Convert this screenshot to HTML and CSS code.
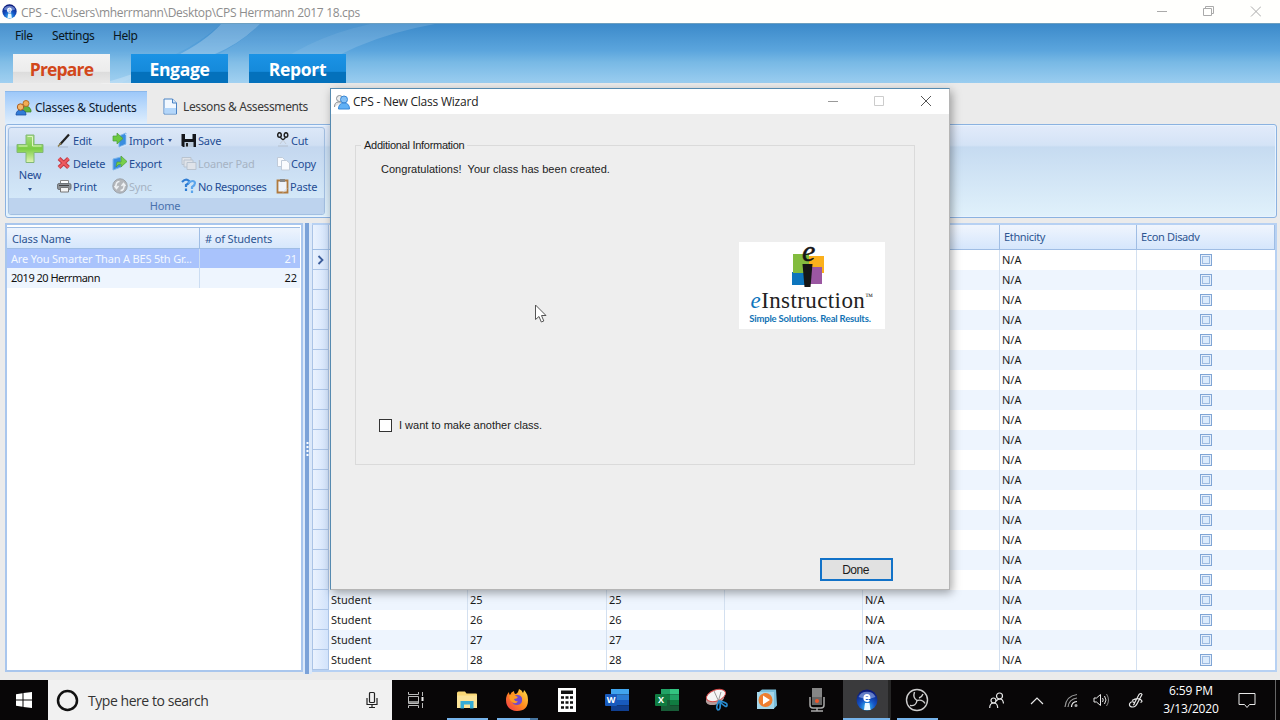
FILE: index.html
```html
<!DOCTYPE html>
<html lang="en">

<head>
    <meta charset="UTF-8">
    <title>CPS</title>
    <link rel="stylesheet" href="styles.css">
</head>

<body>
    <svg class="defs" width="0" height="0">
        <defs>
            <radialGradient id="orb" cx="50%" cy="85%" r="80%">
                <stop offset="0" stop-color="#39c4f5" />
                <stop offset=".45" stop-color="#1557c8" />
                <stop offset="1" stop-color="#0a1878" />
            </radialGradient>
            <linearGradient id="plus" x1="0" y1="0" x2="0" y2="1">
                <stop offset="0" stop-color="#a5dd80" />
                <stop offset=".5" stop-color="#7ccd45" />
                <stop offset="1" stop-color="#e0f5b4" />
            </linearGradient>
            <linearGradient id="fire" x1="1" y1="0" x2="0" y2="1">
                <stop offset="0" stop-color="#ffe14a" />
                <stop offset=".5" stop-color="#ff8a1e" />
                <stop offset="1" stop-color="#f0304f" />
            </linearGradient>
            <symbol id="cps" viewBox="0 0 22 22">
                <circle cx="11" cy="11" r="10.5" fill="url(#orb)" />
                <path d="M2.500 8a9 8 0 0 1 17 0q-8 3-17 0z" fill="#a9bdf0" opacity=".55" />
                <path d="M8.500 9h5c0-4-5-4-5.200 0 0 3.500 3.500 3.500 5 2" fill="none" stroke="#fff" stroke-width="1.800" />
                <path d="M9 14h4.500l1 7h-6.500z" fill="#eaf8ff" />
            </symbol>
        </defs>
    </svg>

    <header class="titlebar">
        <svg class="app-icon" width="15" height="15"><use href="#cps" /></svg>
        <span class="title">CPS - C:\Users\mherrmann\Desktop\CPS Herrmann 2017 18.cps</span>
        <svg class="win-buttons" width="110" height="22" fill="none" stroke="#aaa">
            <path d="M6 10.500h10" />
            <path d="M52.500 7.500h8v7h-8zM54.500 7v-1.500h8v7h-2M100 5.500l10 10M110 5.500l-10 10" />
        </svg>
    </header>

    <div class="banner">
        <svg class="rays" width="500" height="60">
            <path d="M0 0h221q-20 18-45 30L120 60H0z" fill="#fff" opacity=".07" />
            <path d="M221 0h39q-20 20-45 30L150 60H100q90-25 121-60z" fill="#fff" opacity=".24" />
            <path d="M260 0h110q-70 15-120 60h-100q80-28 110-60z" fill="#fff" opacity=".08" />
            <path d="M370 0h65q-85 15-140 60h-45Q300 15 370 0z" fill="#fff" opacity=".14" />
        </svg>
        <nav class="menu">
            <span class="m-file">File</span><span class="m-settings">Settings</span><span class="m-help">Help</span>
        </nav>
        <nav class="modes">
            <div class="mode active"><span>Prepare</span></div>
            <div class="mode"><span>Engage</span></div>
            <div class="mode"><span>Report</span></div>
        </nav>
    </div>

    <main class="workspace">
        <div class="subtabs">
            <div class="subtab active">
                <svg width="17" height="17">
                    <path d="M6.500 12q0-5 4-5t5.500 4v2h-9z" fill="#62b33f" stroke="#3c8129" stroke-width=".7" />
                    <circle cx="11" cy="4.500" r="3" fill="#f2ad53" stroke="#b06f24" />
                    <path d="M1 16q0-5 5-5t5 5z" fill="#2f7bd7" stroke="#1a4fa3" stroke-width=".8" />
                    <circle cx="5.500" cy="8" r="3.200" fill="#f4b76a" stroke="#a95f26" />
                </svg>
                <span>Classes &amp; Students</span>
            </div>
            <div class="subtab lessons">
                <svg width="15" height="17">
                    <path d="M1 1h8.500l4 4v11H1z" fill="#f2f8ff" stroke="#4b83c4" />
                    <path d="M1.500 10h11.500v5.500h-11.500z" fill="#b3d6fa" />
                    <path d="M9.500 1v4h4" fill="#d2e6fb" stroke="#4b83c4" />
                </svg>
                <span>Lessons &amp; Assessments</span>
            </div>
        </div>

        <div class="ribbon">
            <div class="group">
                <div class="tools">
                    <div class="new-btn">
                        <svg width="28" height="30">
                            <path d="M10 1h8v9.500h9v8h-9v10h-8v-10H1v-8h9z" fill="url(#plus)" stroke="#82b878" />
                            <path d="M11.500 2.500h5v9.500h9M2.500 12h9" stroke="#dff5c2" fill="none" />
                        </svg>
                        <span>New</span>
                        <i class="caret"></i>
                    </div>
                    <div class="col c1">
                        <div class="tool">
                            <svg width="14" height="15"><path d="M1 14h10" stroke="#a9b9cf" /><path d="M3 11.500L12 1.500" stroke="#222" stroke-width="2.200" /><path d="M1 13.500l3-3.500" stroke="#8a7a48" stroke-width="1.300" /></svg>
                            <span>Edit</span>
                        </div>
                        <div class="tool">
                            <svg width="14" height="14"><path d="M2 2.500l9.500 9M11.500 2.500l-9.500 9" stroke="#c13a45" stroke-width="4" /><path d="M2 2.500l9.500 9M11.500 2.500l-9.500 9" stroke="#ee5a60" stroke-width="2" /></svg>
                            <span>Delete</span>
                        </div>
                        <div class="tool">
                            <svg width="15" height="14"><path d="M3.500 5V1.500h8V5" fill="#fff" stroke="#888" /><rect x=".5" y="4.500" width="13.500" height="6" rx="1.500" fill="#8d9297" stroke="#707579" /><path d="M3.500 8.500h8v4.500h-8z" fill="#f4f4f4" stroke="#777" /><path d="M2 6.500h10" stroke="#444" /></svg>
                            <span>Print</span>
                        </div>
                    </div>
                    <div class="col c2">
                        <div class="tool">
                            <svg width="16" height="16"><path d="M7 4l7-3v11l-7 3z" fill="#3a8de0" stroke="#7fb5ea" /><path d="M13 2l2 1v10l-7 2.500" stroke="#cfe4fa" fill="none" /><path d="M1 4h4V1l6 5.500-6 5.500V9H1z" fill="#6cc93f" stroke="#4c9c3a" stroke-width=".7" /></svg>
                            <span>Import</span><i class="caret"></i>
                        </div>
                        <div class="tool">
                            <svg width="16" height="16"><path d="M1 4l8-2v10l-8 3z" fill="#3a8de0" stroke="#7fb5ea" /><path d="M5 7h4V1l6 5.500-6 5.500V9q-3 0-5 3z" fill="#79d04a" stroke="#4c9c3a" stroke-width=".7" /></svg>
                            <span>Export</span>
                        </div>
                        <div class="tool off">
                            <svg width="16" height="16"><circle cx="8" cy="8" r="7.200" fill="#b4b7bb" stroke="#9da3aa" /><path d="M7.500 3.500q-4 0-3.500 6M2.500 8L4.500 10.500 6.500 8M8.500 12.500q4 0 3.500-6M9.500 8L11.500 5.500 13.500 8" stroke="#eef1f4" stroke-width="1.500" fill="none" /></svg>
                            <span>Sync</span>
                        </div>
                    </div>
                    <div class="col c3">
                        <div class="tool">
                            <svg width="16" height="15"><path d="M.5 1h14.500v13H2l-1.500-1.500z" fill="#15171c" /><path d="M4 1h7.500v5H4z" fill="#dce9f7" /><path d="M3.500 9h9v5h-9z" fill="#bccbdc" /><path d="M5 10h2v3.500H5z" fill="#222" /></svg>
                            <span>Save</span>
                        </div>
                        <div class="tool off">
                            <svg width="16" height="15" fill="#dfe3e9" stroke="#b9c3cf"><path d="M1 1.500h9v7H1z" /><path d="M3 4h9v7H3z" /><path d="M6 6.500h9v7H6z" /></svg>
                            <span>Loaner Pad</span>
                        </div>
                        <div class="tool noresp">
                            <svg width="16" height="16" fill="none" stroke="#2e7cd3" stroke-width="2.200"><path d="M1 4q4-4 7-1 1 2-3 4v2M5 10.500v2.500" /><path d="M7 5q6-4 7 0 0 2-3 4v2M11 12.500v2.500" stroke="#5ba5ec" /></svg>
                            <span>No Responses</span>
                        </div>
                    </div>
                    <div class="col c4">
                        <div class="tool">
                            <svg width="15" height="16"><path d="M2 14h10" stroke="#b5c0ce" /><ellipse cx="3.500" cy="3" rx="1.800" ry="2.300" fill="none" stroke="#222" stroke-width="1.500" /><ellipse cx="10" cy="3" rx="1.800" ry="2.300" fill="none" stroke="#222" stroke-width="1.500" /><path d="M4 5l3 3 3-3" stroke="#222" fill="none" stroke-width="1.300" /><path d="M7 8l3 4M7 8l-3 4" stroke="#c5ccd6" /></svg>
                            <span>Cut</span>
                        </div>
                        <div class="tool">
                            <svg width="15" height="15" fill="#f9fbfe" stroke="#c0cbd9"><path d="M1.500 1.500h5l2 2v7h-7z" /><path d="M5.500 4.500h5l3 2.500v7h-8z" /></svg>
                            <span>Copy</span>
                        </div>
                        <div class="tool">
                            <svg width="14" height="16"><path d="M1.500 2.500h10v12h-10z" fill="#eef3fa" stroke="#b07a3e" stroke-width="1.800" /><path d="M4 1h5v3H4z" fill="#888" /><path d="M7 14.500l4-4" stroke="#ccd5e0" /></svg>
                            <span>Paste</span>
                        </div>
                    </div>
                </div>
                <div class="group-label">Home</div>
            </div>
        </div>

        <div class="panels">
            <section class="class-list">
                <div class="class-row head"><span>Class Name</span><span>#&nbsp;of Students</span></div>
                <div class="class-row selected"><span>Are You Smarter Than A BES 5th Gr...</span><span>21</span></div>
                <div class="class-row second"><span>2019 20 Herrmann</span><span>22</span></div>
            </section>
            <div class="splitter"><svg width="5" height="16"><path d="M2.500 1v14" stroke="#fff" stroke-width="2" stroke-dasharray="2 2" /></svg></div>
            <section class="grid" id="grid">
                <div class="grid-row head">
                    <b></b><span></span><span></span><span></span><span></span><span></span><span>Ethnicity</span><span>Econ Disadv</span>
                </div>
            </section>
        </div>
    </main>

    <div class="dialog">
        <div class="dialog-title">
            <svg width="16" height="16">
                <circle cx="5.500" cy="4.500" r="3" fill="#eee" stroke="#8b8f94" />
                <path d="M.5 13q0-5 4-5h4" fill="#e5e5e5" stroke="#8b8f94" />
                <circle cx="10" cy="5.500" r="3.500" fill="#84c0f5" stroke="#3787d6" />
                <path d="M4.500 15q0-6 5.500-6t5.500 6z" fill="#5fb0f5" stroke="#3787d6" />
            </svg>
            <span>CPS - New Class Wizard</span>
            <svg class="dialog-buttons" width="104" height="20" fill="none">
                <path d="M1 9.500h10" stroke="#999" />
                <path d="M47.500 4.500h9v9h-9z" stroke="#ccc" />
                <path d="M94 4l10 10M104 4l-10 10" stroke="#555" />
            </svg>
        </div>
        <fieldset class="info">
            <legend>Additional Information</legend>
            <p class="congrats">Congratulations!&nbsp; Your class has been created.</p>
            <div class="logo">
                <svg width="40" height="48">
                    <path d="M3 30h13v13H3z" fill="#0d75bd" />
                    <path d="M4 12h16v19H4z" fill="#83bc3e" />
                    <path d="M20 14h15v17H20z" fill="#fbb01c" />
                    <path d="M20 25h13v17H20z" fill="#9b57a2" />
                    <path d="M13.500 22h10l-2 23h-6z" fill="#161616" />
                    <text x="13" y="19" class="logo-e">e</text>
                </svg>
                <div class="brand"><i>e</i><span>Instruction</span><sup>™</sup></div>
                <div class="slogan">Simple Solutions. Real Results.</div>
            </div>
            <label class="another"><i class="box"></i><span>I want to make another class.</span></label>
        </fieldset>
        <button class="done">Done</button>
    </div>

    <svg class="cursor" width="14" height="20"><path d="M1.500 1v14.500l3.500-3 2.300 5.500 2.500-1-2.300-5.500h4.500z" fill="#fff" stroke="#555" /></svg>

    <footer class="taskbar">
        <div class="start"><svg width="16" height="16" fill="#fff"><path d="M0 2.200L6.500 1.300v6.200H0zM7.500 1.100L16 0v7.500H7.500zM0 8.500h6.500v6.200L0 13.800zM7.500 8.500H16V16l-8.500-1.100z" /></svg></div>
        <div class="search">
            <svg width="23" height="23"><circle cx="11.500" cy="11.500" r="9.500" fill="none" stroke="#111" stroke-width="2.500" /></svg>
            <span>Type here to search</span>
            <svg width="12" height="18" fill="none" stroke="#222" stroke-width="1.200"><rect x="3.500" y="1.500" width="5" height="10" rx="1" /><path d="M1 7v6.500h10V7M6 13.500v3M3 16.500h6" /></svg>
        </div>
        <div class="apps">
            <div class="app"><svg width="18" height="18" fill="none" stroke="#bbb"><path d="M1.500 1v2.500h10V1M1.500 17v-2.500h10V17M1.500 5.500h10v7h-10zM15.500 1v4M15.500 12v5" /><path d="M2 10h9v2H2z" fill="#888" stroke="none" /><path d="M15.500 6v4" stroke="#eee" stroke-width="2" /></svg></div>
            <div class="app open"><svg width="22" height="20"><path d="M1 3q0-1.500 1.500-1.500H9l1.500 2H20q1 0 1 1V18H1z" fill="#f9d775" /><path d="M1 5.500h20V18H1z" fill="#fbe398" /><path d="M4.500 18.500V11h13v7.500h-3.500v-4H8v4z" fill="#35acd6" /></svg></div>
            <div class="app open split"><svg width="24" height="24"><path d="M14 1q3 1 4 4 1-2 1-3 4 4 4 10 0 11-11 11Q1 22 1 12q0-5 3-8 0 3 1 3 1-3 4-4 0 2 1 3 3 0 4-5z" fill="url(#fire)" /><path d="M8 8q7-3 9 2 1 7-5 7-5 0-5-5 0-2 1-4z" fill="#7449cb" /><path d="M5 7q4-1 6 1l2 1q-1 2-4 2 1 3 4 2-2 4-6 1-4-3-2-7z" fill="#ff9c21" /></svg></div>
            <div class="app"><svg width="18" height="24"><path d="M0 0h18v24H0z" fill="#fff" /><path d="M3 2.500h12v3.500H3z" fill="#111" /><path d="M3 9.500h12M3 14.500h12M3 19.500h12" stroke="#111" stroke-width="2.500" stroke-dasharray="3 1.500" /></svg></div>
            <div class="app"><svg width="24" height="22"><path d="M6 0h18v5.500H6z" fill="#41a5ee" /><path d="M6 5.500h18V11H6z" fill="#2b7cd3" /><path d="M6 11h18v5.500H6z" fill="#185abd" /><path d="M6 16.500h18V22H6z" fill="#103f91" /><rect y="5" width="12" height="12" rx="1" fill="#185abd" /><text x="6" y="14.300" class="ms">W</text></svg></div>
            <div class="app"><svg width="24" height="22"><path d="M6 0h9v5.500H6z" fill="#21a366" /><path d="M15 0h9v5.500h-9z" fill="#33c481" /><path d="M6 5.500h9V11H6zM15 11h9v5.500h-9z" fill="#107c41" /><path d="M15 5.500h9V11h-9z" fill="#21a366" /><path d="M6 11h9v5.500H6zM6 16.500h18V22H6z" fill="#185c37" /><rect y="5" width="12" height="12" rx="1" fill="#107c41" /><text x="6" y="14.300" class="ms">X</text></svg></div>
            <div class="app"><svg width="24" height="24"><ellipse cx="10" cy="11" rx="9.500" ry="5.500" fill="#b39c9c" transform="rotate(-20 10 11)" /><ellipse cx="11" cy="7.500" rx="10" ry="5.500" fill="#f5f5f5" stroke="#d74949" transform="rotate(-20 11 7.500)" /><path d="M9 3l5 11M16 4l-3 10" stroke="#999" /><path d="M14 13q-4 7-1 9 3 0 2-8 7 7 7 3 1-2-7-4z" fill="none" stroke="#288bd0" stroke-width="1.700" /></svg></div>
            <div class="app"><svg width="22" height="22"><path d="M3 3l3-2.500h14l1 16-3 3z" fill="#79bdda" /><path d="M1 3h17v17H1z" fill="#a4d6ea" /><circle cx="9.500" cy="11" r="7" fill="#ee7e2f" /><path d="M7 6.500l7 4.500-7 4.500z" fill="#fff" /></svg></div>
            <div class="app"><svg width="16" height="24"><path d="M3 0h10v9H3z" fill="#858585" /><path d="M3 9h10v8H3z" fill="#666" /><path d="M1 9v8q0 3 3 3h8q3 0 3-3V9M8 20v3M2 23h12" fill="none" stroke="#aaa" stroke-width="1.500" /><circle cx="8" cy="13" r="2" fill="#f0572a" /></svg></div>
            <div class="app open current"><svg width="22" height="22"><use href="#cps" /></svg></div>
            <div class="app open"><svg width="24" height="24" fill="none" stroke="#ccc" stroke-width="1.400"><circle cx="12" cy="12" r="10.500" /><path d="M9.500 4q-2 6 2.500 8.500 5.500-1.500 8 3M12 12.500q-1 6-7 5M18 6q-1 3-4 4" /></svg></div>
        </div>
        <div class="tray">
            <svg width="15" height="17" fill="none" stroke="#e8e8e8" stroke-width="1.200"><circle cx="10.500" cy="4" r="3" /><circle cx="4.500" cy="8.500" r="2.500" /><path d="M.7 16q0-5 4-5t4 5M7 9q2-2 4-2 3 0 3.500 4.500" /></svg>
            <svg class="up" width="14" height="9" fill="none" stroke="#e8e8e8" stroke-width="1.200"><path d="M1 8l6-6 6 6" /></svg>
            <svg class="wifi" width="15" height="15" fill="none" stroke="#999" stroke-width="1.200"><path d="M1 14Q2 3 13 1.500" /><path d="M4 14q1-8 9-9" /><path d="M7.500 14q0-5 5.500-5.500" stroke="#eee" /><circle cx="12" cy="12.500" r="1" fill="#eee" /></svg>
            <svg class="vol" width="16" height="14" fill="none" stroke="#e8e8e8"><path d="M1 5h2.500l4-3.500v11l-4-3.500H1zM9.500 5q1.500 2 0 4M11.500 3q3 4 0 8" /><path d="M13.500 1q4 6 0 12" stroke="#888" /></svg>
            <svg class="pen" width="16" height="16" fill="none" stroke="#e8e8e8" stroke-width="1.200"><path d="M6.500 11L11 2.500q2-2 3 0L9.500 11q-2 4-4.500 4-4 0-3.500-3 1-3 4-2 2 2-.5 3M4 8.500q5-3 8.500-1 3 2 0 3" /></svg>
            <div class="clock"><span>6:59 PM</span><span>3/13/2020</span></div>
            <svg class="note" width="18" height="17" fill="none" stroke="#e8e8e8"><path d="M1 1.500h16v11h-5.500l-2.500 3-2.500-3H1z" /></svg>
        </div>
    </footer>

    <script>
        const grid = document.getElementById("grid");
        const rowCount = 21;
        // rows from this one on sit below the dialog
        const firstFullRow = 17;

        for (let i = 0; i < rowCount; i++) {
            const full = i >= firstFullRow;
            const cells = full ? ["Student", i + 8, i + 8, "", "N/A"] : ["", "", "", "", ""];
            const row = document.createElement("div");
            row.className = "grid-row";
            row.innerHTML = `<b>${i == 0 ? '<svg width="7" height="10"><path d="M1.500 1l4 4-4 4" fill="none" stroke="#3e5f9c" stroke-width="1.800"/></svg>' : ""}</b>`
                + cells.map(c => `<span>${c}</span>`).join("")
                + '<span>N/A</span><span class="check"><i></i></span>';
            grid.appendChild(row);
        }
    </script>
</body>

</html>
```
FILE: styles.css
```css
*,
*::before {
    box-sizing: border-box;
}

body {
    margin: 0;
    width: 1280px;
    height: 720px;
    overflow: hidden;
    display: flex;
    flex-direction: column;
    font-family: "Noto Sans", sans-serif;
    font-size: 11px;
    color: #1b1b1b;
    background: #ebebeb;
}

span,
legend,
p {
    white-space: nowrap;
}

svg {
    flex: none;
    display: block;
}

.defs {
    position: absolute;
}

.titlebar {
    height: 24px;
    flex: none;
    display: flex;
    align-items: center;
    padding: 0 19px 0 2px;
    background: #fffffd;
    border-bottom: 1px solid #6c9fc0;
}

.title {
    margin-left: 4px;
    padding-top: 2px;
    font-family: "Open Sans", sans-serif;
    font-size: 12px;
    letter-spacing: -.32px;
    color: #8d8d8d;
}

.win-buttons {
    margin-left: auto;
}

.banner {
    height: 59px;
    flex: none;
    position: relative;
    background: linear-gradient(#3c8aca, #5ba5dd 45%, #78b9e5 65%, #9acdf0);
}

.rays {
    position: absolute;
    left: 0;
    top: 0;
}

.menu {
    position: relative;
    display: flex;
    height: 30px;
    padding: 3px 0 0 15px;
    line-height: 17px;
    font-size: 12px;
    letter-spacing: -.4px;
    color: #0a1620;
}

.m-file {
    width: 37px;
}

.m-settings {
    width: 61px;
}

.modes {
    position: relative;
    display: flex;
    gap: 21px;
    padding-left: 13px;
}

.mode {
    width: 97px;
    height: 29px;
    display: flex;
    align-items: center;
    justify-content: center;
    background: linear-gradient(#1b93e5 0, #158adb 60%, #0471bc 62%, #0471bc);
    color: #fff;
    font-family: "Open Sans", sans-serif;
    font-size: 17.5px;
    font-weight: 700;
    letter-spacing: -.3px;
}

.mode.active {
    background: linear-gradient(#f3f3f3 0, #ececec 60%, #dcdcdc 62%, #e8e8e8);
    color: #d2481b;
    letter-spacing: -.8px;
}

.workspace {
    height: 597px;
    flex: none;
    padding: 8px 3px 0 5px;
    border-left: 1px solid #c6c9cc;
    margin-left: -1px;
    background: #ebebeb;
}

.subtabs {
    display: flex;
    height: 33px;
    font-size: 12px;
    color: #3a3a3a;
}

.subtab {
    display: flex;
    align-items: center;
    gap: 4px;
    padding: 0 10px 2px 16px;
    letter-spacing: -.38px;
}

.subtab svg {
    margin-right: 1px;
}

.subtab.active {
    width: 142px;
    padding-left: 10px;
    padding-right: 0;
    gap: 2px;
    letter-spacing: -.28px;
    background: linear-gradient(#9dc8f9, #b8d8fb 40%, #dfeefd);
    border-top: 1px solid #8cb8ea;
    color: #0e1c33;
}

.ribbon {
    height: 94px;
    width: 1272px;
    padding: 2px;
    border: 1px solid #8bb2e0;
    border-radius: 3px;
    background: linear-gradient(#e2ebfa, #d4e3f6 22%, #c6dbf1 24%, #e0f1fb);
    box-shadow: inset 0 0 0 1px #e8f3ff;
}

.group {
    width: 317px;
    height: 88px;
    border: 1px solid #a3bfe2;
    border-radius: 3px;
    overflow: hidden;
    background: linear-gradient(#dce8f8, #d0dff3 20%, #c4d7ef 22%, #d8edfb);
    color: #234c94;
}

.tools {
    height: 70px;
    display: flex;
    padding-top: 1px;
}

.new-btn {
    width: 42px;
    display: flex;
    flex-direction: column;
    align-items: center;
    padding-top: 5px;
    letter-spacing: -.2px;
}

.new-btn span {
    line-height: 15px;
    margin-top: 3px;
}

.caret {
    width: 0;
    height: 0;
    border: 2.5px solid transparent;
    border-top: 3px solid #31579b;
    border-bottom: 0;
}

.new-btn .caret {
    margin-top: 6px;
}

.col {
    display: flex;
    flex-direction: column;
}

.tool {
    height: 23px;
    display: flex;
    align-items: center;
    gap: 1px;
    padding-bottom: 1px;
    letter-spacing: -.2px;
}

.tool .caret {
    margin-left: 3px;
}

.tool.off {
    color: #a6b3c3;
}

.tool.noresp {
    letter-spacing: -.4px;
}

.c1 {
    width: 61px;
    padding-left: 6px;
}

.c1 .tool {
    gap: 2px;
}

.c1 .tool:last-child {
    gap: 1px;
}

.c2 {
    width: 69px;
}

.c3 {
    width: 95px;
}

.c4 .tool {
    gap: 0;
}

.group-label {
    height: 16px;
    line-height: 16px;
    padding-right: 3px;
    text-align: center;
    letter-spacing: -.2px;
    background: #bdd3ee;
    color: #4a71ad;
}

.panels {
    height: 452px;
    margin-top: 5px;
    display: flex;
}

.class-list {
    width: 298px;
    height: 449px;
    border: 2px solid #a9c6ed;
    background: #fff;
    padding: 2px 1px 0 0;
}

.class-row {
    height: 19px;
    display: flex;
    line-height: 17px;
    color: #111;
    background: #eef5fe;
}

.class-row span:first-child {
    width: 193px;
    padding-left: 4px;
    border-right: 1px solid #ccddf2;
}

.class-row span:last-child {
    flex: 1;
    text-align: right;
    padding-right: 3px;
}

.class-row.head {
    height: 22px;
    line-height: 21px;
    letter-spacing: -.15px;
    color: #2d5592;
    background: linear-gradient(#eef4fd, #d6e7fc);
    border: 1px solid #9fbde4;
    border-width: 1px 0;
}

.class-row.head span:first-child {
    padding-left: 5px;
    border-color: #9fbde4;
}

.class-row.head span:last-child {
    text-align: left;
    padding-left: 5px;
}

.class-row.selected {
    line-height: 19px;
    background: #a9c3fc;
    color: #f3f8ff;
}

.class-row.selected span:first-child {
    letter-spacing: -.18px;
}

.class-row.second {
    height: 20px;
    line-height: 19px;
}

.class-row.second span:first-child {
    letter-spacing: -.5px;
}

.splitter {
    width: 9px;
    height: 451px;
    display: flex;
    align-items: center;
    justify-content: center;
    background: #7ba2d8;
    border: solid #dce9fa;
    border-width: 0 3px 0 2px;
}

.grid {
    flex: 1;
    height: 449px;
    border: solid #b7d1f3;
    border-width: 2px 2px 2px 0;
    background: #fff;
}

.grid-row {
    height: 20px;
    display: grid;
    grid-template-columns: 17px 139px 139px 118px 138px 137px 137px 1fr;
    line-height: 19px;
}

.grid-row:nth-child(odd) {
    background: #eef5fe;
}

.grid-row span {
    border-right: 1px solid #d3e0f0;
    padding-left: 2px;
}

.grid-row b {
    display: flex;
    align-items: center;
    justify-content: center;
    background: linear-gradient(90deg, #eaf2fe, #d2e3fb);
    border: 1px solid #abc4e6;
    border-width: 0 1px 1px;
}

.grid-row.head {
    height: 25px;
    line-height: 24px;
    background: linear-gradient(#f0f5fd, #d5e6fc);
    border-bottom: 1px solid #9fbde4;
    color: #2d5592;
    letter-spacing: -.35px;
}

.grid-row.head b {
    border-bottom: 0;
}

.grid-row.head span {
    padding-left: 4px;
    border-color: #9fbde4;
}

.grid-row .check {
    display: flex;
    align-items: flex-start;
    padding: 4px 0 0 63px;
    border-right: 0;
}

.check i {
    width: 12px;
    height: 12px;
    border: 1px solid #80a5d5;
    background: #e6effb;
    padding: 1px;
}

.check i::before {
    content: "";
    display: block;
    width: 8px;
    height: 8px;
    border: 1px solid #9dbbe2;
    background: #dcebfc;
}

/* modal window over the workspace */
.dialog {
    position: absolute;
    left: 330px;
    top: 88px;
    width: 620px;
    height: 502px;
    background: #eee;
    border: 1px solid #558ab0;
    border-right-color: #b5b5b5;
    border-bottom-color: #b5b5b5;
    box-shadow: 2px 3px 9px rgba(0, 0, 0, .35);
    font-family: "Liberation Sans", sans-serif;
}

.dialog-title {
    height: 25px;
    display: flex;
    align-items: center;
    padding: 0 18px 0 3px;
    gap: 3px;
    background: #fff;
    font-family: "Open Sans", sans-serif;
    font-size: 12px;
    letter-spacing: -.22px;
    color: #222;
}

.dialog-buttons {
    margin-left: auto;
}

.info {
    margin: 25px 0 0 24px;
    width: 560px;
    height: 326px;
    padding: 0 29px 0 25px;
    border: 1px solid #dadada;
    display: flex;
    flex-direction: column;
}

.info legend {
    margin-left: -20px;
    padding: 0 3px;
    line-height: 13px;
    letter-spacing: -.27px;
}

.congrats {
    margin: 10px 0 0;
    line-height: 14px;
    letter-spacing: .03px;
}

.logo {
    width: 146px;
    height: 87px;
    margin: 66px 0 0;
    align-self: flex-end;
    background: #fff;
    display: flex;
    flex-direction: column;
    align-items: center;
}

.logo svg {
    margin-left: -6px;
    overflow: visible;
}

.logo-e {
    font: italic 30px "Liberation Serif", serif;
    fill: #161616;
    stroke: #161616;
    stroke-width: .5px;
}

.brand {
    display: flex;
    height: 22px;
    line-height: 22px;
    font-family: "Liberation Serif", serif;
    font-size: 23px;
    letter-spacing: .4px;
    color: #222;
}

.brand i {
    color: #0d75bd;
}

.brand sup {
    font-size: 8px;
    line-height: 14px;
}

.slogan {
    font-family: Lato, sans-serif;
    font-size: 9.5px;
    font-weight: 700;
    line-height: 14px;
    letter-spacing: -.2px;
    margin-left: -4px;
    color: #1273b5;
    white-space: nowrap;
}

.another {
    display: flex;
    align-items: center;
    margin: 90px 0 0 -2px;
    gap: 7px;
}

.another span {
    padding-bottom: 1px;
}

.box {
    width: 13px;
    height: 13px;
    border: 1px solid #333;
    background: #fff;
}

.done {
    display: block;
    width: 73px;
    height: 23px;
    margin: 93px 0 0 489px;
    padding: 1px 2px 0 0;
    border: 2px solid #1272c8;
    background: #e1e1e1;
    font: 12px "Liberation Sans", sans-serif;
    letter-spacing: -.5px;
    color: #1b1b1b;
}

.cursor {
    position: absolute;
    left: 534px;
    top: 304px;
}

.taskbar {
    height: 40px;
    flex: none;
    display: flex;
    background: #080607;
    color: #fff;
    font-family: "Open Sans", sans-serif;
}

.start {
    width: 48px;
    display: flex;
    align-items: center;
    justify-content: center;
}

.search {
    width: 344px;
    display: flex;
    align-items: center;
    padding: 0 14px 0 8px;
    background: #f1f1f1;
    color: #333;
    font-size: 14px;
    letter-spacing: -.45px;
}

.search span {
    flex: 1;
    margin-left: 9px;
}

.apps {
    display: flex;
    padding-left: 1px;
}

.app {
    width: 50px;
    padding: 0 4px;
    display: flex;
    align-items: center;
    justify-content: center;
}

.app:first-child {
    width: 49px;
    padding-right: 7px;
}

.app.open {
    background: linear-gradient(#76b3ea, #76b3ea) 5px 38px / 41px 2px no-repeat;
}

.app.open.split {
    background: linear-gradient(90deg, #76b3ea 33px, #47759f 33px) 5px 38px / 41px 2px no-repeat;
}

.app.open.current {
    background: linear-gradient(#76b3ea, #76b3ea) 1px 38px / 47px 2px no-repeat,
        linear-gradient(90deg, #3a3a3c 45px, #252525 45px) 1px 0 / 48px 40px no-repeat;
}

.ms {
    font: bold 9px "Open Sans", sans-serif;
    fill: #fff;
    text-anchor: middle;
}

.tray {
    flex: 1;
    display: flex;
    align-items: center;
    padding-left: 47px;
    border-right: 1px solid #666;
    margin-right: 4px;
}

.up {
    margin-left: 26px;
}

.wifi {
    margin-left: 20px;
}

.vol {
    margin-left: 14px;
}

.pen {
    margin-left: 19px;
}

.clock {
    width: 62px;
    margin-left: 16px;
    display: flex;
    flex-direction: column;
    align-items: center;
    line-height: 18px;
    font-size: 12px;
    letter-spacing: -.15px;
}

.note {
    margin-left: 16px;
}
```
